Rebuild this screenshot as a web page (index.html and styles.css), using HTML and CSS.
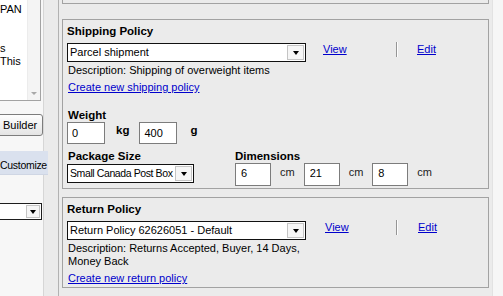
FILE: index.html
```html
<!DOCTYPE html>
<html lang="en">
<head>
<meta charset="utf-8">
<title>Shipping and return policy</title>
<link rel="stylesheet" href="styles.css">
</head>
<body>
<div class="page">
  <aside class="side">
    <div class="notes">
      <div class="notes-text">
        <div class="ln">PAN</div>
        <div class="ln">&nbsp;</div>
        <div class="ln">&nbsp;</div>
        <div class="ln">s</div>
        <div class="ln">This</div>
      </div>
      <div class="vscroll"><span class="tri tri-light"></span></div>
    </div>
    <button class="btn" type="button">Builder</button>
    <div class="custom">Customize</div>
    <div class="side-select"><span class="drop"><span class="tri"></span></span></div>
  </aside>

  <main class="main">
    <div class="box box-top"></div>

    <section class="box">
      <h3 class="title">Shipping Policy</h3>
      <div class="policy-row">
        <div class="select select-wide"><span class="sel-text">Parcel shipment</span><span class="drop"><span class="tri"></span></span></div>
        <a class="link view" href="#">View</a>
        <span class="sep"></span>
        <a class="link edit" href="#">Edit</a>
      </div>
      <p class="desc">Description: Shipping of overweight items</p>
      <div class="create"><a class="link" href="#">Create new shipping policy</a></div>

      <div class="label weight-label">Weight</div>
      <div class="weight-row">
        <input class="field field-w" type="text" value="0">
        <span class="unit-b kg">kg</span>
        <input class="field field-w g-field" type="text" value="400">
        <span class="unit-b g">g</span>
      </div>

      <div class="pkg-grid">
        <div class="pkg">
          <div class="label">Package Size</div>
          <div class="select select-pkg"><span class="sel-text tight">Small Canada Post Box</span><span class="drop"><span class="tri"></span></span></div>
        </div>
        <div class="dims">
          <div class="label">Dimensions</div>
          <div class="dim-row">
            <input class="field field-d" type="text" value="6"><span class="unit">cm</span>
            <input class="field field-d" type="text" value="21"><span class="unit">cm</span>
            <input class="field field-d" type="text" value="8"><span class="unit">cm</span>
          </div>
        </div>
      </div>
    </section>

    <section class="box box-return">
      <h3 class="title">Return Policy</h3>
      <div class="policy-row policy-row-ret">
        <div class="select select-wide"><span class="sel-text">Return Policy 62626051 - Default</span><span class="drop"><span class="tri"></span></span></div>
        <a class="link view" href="#">View</a>
        <span class="sep"></span>
        <a class="link edit" href="#">Edit</a>
      </div>
      <p class="desc">Description: Returns Accepted, Buyer, 14 Days, Money Back</p>
      <div class="create"><a class="link" href="#">Create new return policy</a></div>
    </section>
  </main>
  <div class="rail"></div>
</div>
</body>
</html>
```

FILE: styles.css
```css
html, body {
  margin: 0;
  padding: 0;
}

body {
  width: 503px;
  height: 296px;
  overflow: hidden;
  background: #ebebeb;
  color: #000;
  font-family: "Liberation Sans", Arial, sans-serif;
  font-size: 11px;
  line-height: 13px;
}

.page {
  display: flex;
  height: 296px;
}

/* ---------- left column ---------- */
.side {
  flex: none;
  width: 43px;
  border-right: 1px solid #d6d6d6;
  background: #f7f7f7;
}

.notes {
  display: flex;
  width: 41px;
  height: 101px;
  box-sizing: border-box;
  border-right: 1px solid #a3a3a3;
  border-bottom: 1px solid #a3a3a3;
  background: #fff;
}

.notes-text {
  width: 27px;
  padding-top: 3px;
  overflow: hidden;
  white-space: nowrap;
}

.vscroll {
  flex: 1;
  display: flex;
  align-items: flex-end;
  justify-content: center;
  padding-bottom: 5px;
  border-left: 1px solid #ececec;
  background: #f4f4f4;
}

.tri {
  display: block;
  width: 0;
  height: 0;
  border-style: solid;
  border-width: 4px 3.5px 0 3.5px;
  border-color: #000 transparent transparent transparent;
}

.tri-light {
  border-color: #a8a8a8 transparent transparent transparent;
  border-width: 3px 3px 0 3px;
}

.btn {
  display: block;
  width: 49px;
  height: 22px;
  margin: 13px 0 0 -6px;
  padding: 0 0 0 8px;
  box-sizing: border-box;
  border: 1px solid #7d7d7d;
  border-radius: 3px;
  background: linear-gradient(#fefefe, #e4e4e4);
  font: inherit;
  color: #000;
  text-align: left;
}

.custom {
  height: 24px;
  margin: 15px -5px 0 0;
  padding-top: 8px;
  box-sizing: border-box;
  background: #dae1ee;
  border-bottom: 1px solid #cfd6e4;
  font-size: 10.5px;
  letter-spacing: -0.3px;
  white-space: nowrap;
}

.side-select {
  display: flex;
  justify-content: flex-end;
  height: 17px;
  margin: 28px 1px 0 -2px;
  box-sizing: border-box;
  border: 1px solid #1e1e1e;
  background: #fff;
}

/* ---------- main column ---------- */
.main {
  flex: 1;
  margin-left: 14px;
  padding: 0 3px 0 3px;
  border-left: 1px solid #b2b2b2;
  border-right: 1px solid #e2e2e2;
}

.rail {
  flex: none;
  width: 10px;
  background: #f6f6f6;
}

.box {
  margin-top: 15px;
  padding: 4px 4px 2px 4px;
  border: 1px solid #a2a2a2;
}

.box-top {
  height: 3px;
  margin-top: 0;
  padding: 0;
  border-top: 0;
}

.box-return {
  margin-top: 8px;
}

.title {
  margin: 0;
  font-size: 11.5px;
  font-weight: bold;
  line-height: 14px;
}

.label {
  font-size: 11.5px;
  font-weight: bold;
  line-height: 13px;
  white-space: nowrap;
}

.policy-row {
  display: flex;
  align-items: flex-start;
  margin-top: 5px;
}

.select {
  display: flex;
  align-items: stretch;
  height: 19px;
  box-sizing: border-box;
  border: 1px solid #111;
  background: #fff;
  overflow: hidden;
}

.select-wide {
  width: 239px;
}

.select-pkg {
  width: 127px;
  margin-top: 1px;
}

.sel-text {
  flex: 1;
  min-width: 0;
  padding-left: 2px;
  line-height: 17px;
  white-space: nowrap;
}

.sel-text.tight {
  font-size: 10.5px;
  letter-spacing: -0.4px;
}

.drop {
  flex: none;
  display: flex;
  align-items: center;
  justify-content: center;
  width: 15px;
  margin: 1px;
  border: 1px solid #c4c4c4;
  background: #f6f6f6;
}

.side-select .drop {
  width: 12px;
}

.link {
  color: #0000cc;
  text-decoration: underline;
}

.view {
  display: block;
  width: 73px;
  margin-left: 17px;
  line-height: 13px;
}

.sep {
  display: block;
  width: 0;
  height: 15px;
  margin-top: -1px;
  border-left: 1px solid #959595;
  border-right: 1px solid #fdfdfd;
}

.edit {
  display: block;
  margin-left: 19px;
  line-height: 13px;
}

.policy-row-ret .view {
  width: 71px;
  margin-left: 19px;
}

.policy-row-ret .edit {
  margin-left: 20px;
}

.desc {
  max-width: 240px;
  margin: 2px 0 0 1px;
}

.create {
  margin: 4px 0 0 1px;
}

.weight-label {
  margin: 15px 0 0 1px;
}

.weight-row {
  display: flex;
  align-items: flex-start;
}

.field {
  display: block;
  margin: 0;
  box-sizing: border-box;
  border: 1px solid #7c7c7c;
  border-radius: 0;
  background: #fff;
  font: inherit;
  color: #000;
  outline: none;
}

.field-w {
  width: 38px;
  height: 22px;
  padding: 0 4px;
}

.unit-b {
  font-size: 11.5px;
  font-weight: bold;
  line-height: 14px;
  margin-top: 1px;
}

.kg {
  margin-left: 11px;
  margin-right: 10px;
}

.g {
  margin-left: 13px;
}

.pkg-grid {
  display: grid;
  grid-template-columns: 168px auto;
  margin-top: 6px;
}

.pkg .label {
  margin-left: 1px;
}

.dim-row {
  display: flex;
  align-items: flex-start;
}

.field-d {
  width: 36px;
  height: 23px;
  padding: 0 4px 3px 5px;
}

.unit {
  margin: 3px 9px 0 9px;
  color: #222;
}
```
